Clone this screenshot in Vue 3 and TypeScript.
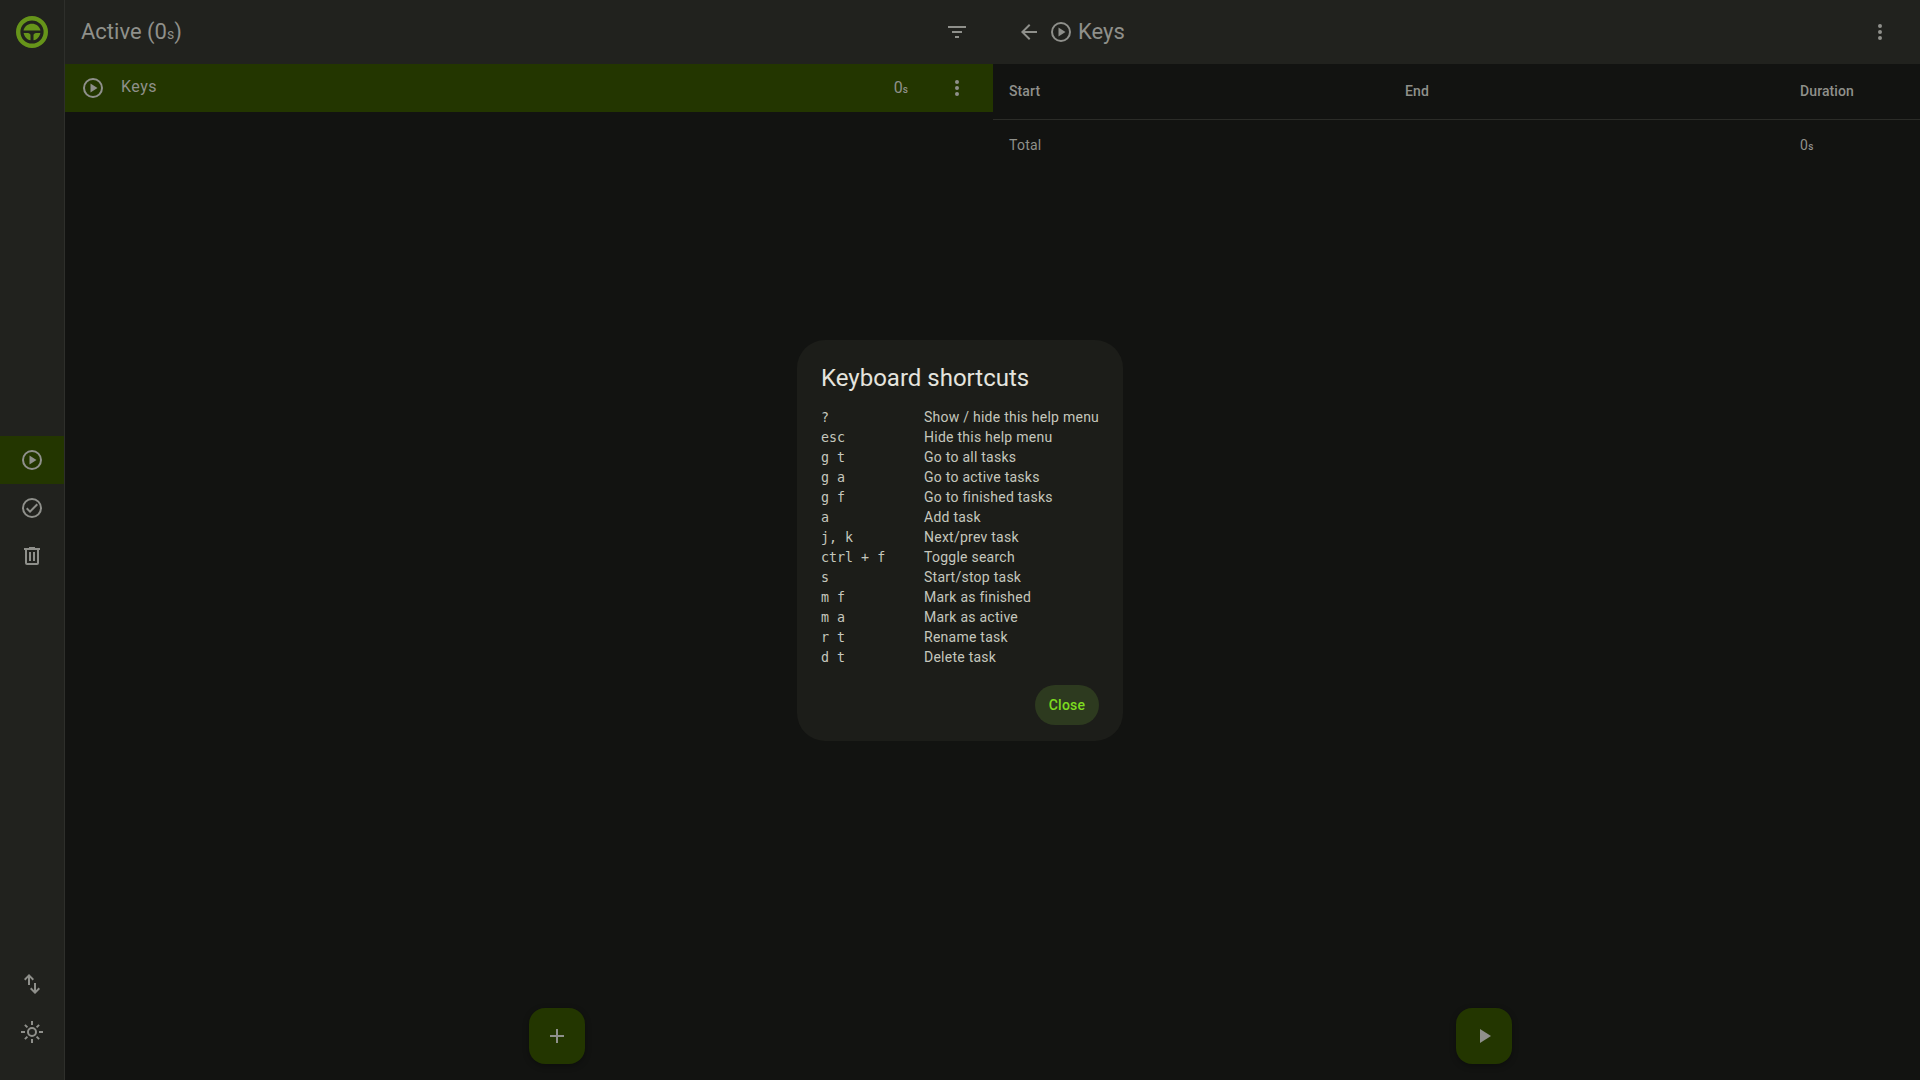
<template>
  <div class="app">
    <nav class="rail">
      <div class="logo">
        <svg width="32" height="32" viewBox="0 0 32 32">
          <circle cx="16" cy="16" r="13.800" fill="none" stroke="#66941a" stroke-width="4.400" />
          <path d="M7.500 14.500C8.400 10.500 12 7.800 16 7.800s7.600 2.700 8.500 6.700z" fill="#66941a" />
          <path d="M7.600 17h4.400c1.200 0 2.500 1 2.500 2.200v5.100c-3.600-.7-6.200-3.600-6.900-7.300z" fill="#66941a" />
          <path d="M24.400 17H20c-1.200 0-2.500 1-2.500 2.200v5.100c3.600-.7 6.200-3.600 6.900-7.300z" fill="#66941a" />
        </svg>
      </div>
      <div class="rail-middle">
        <div class="rail-item selected">
          <svg class="icon" viewBox="0 0 24 24"><path d="M12 2a10 10 0 1 0 0 20 10 10 0 0 0 0-20zm0 18a8 8 0 1 1 0-16 8 8 0 0 1 0 16z" /><path d="M9.500 7.500v9l7-4.500z" /></svg>
        </div>
        <div class="rail-item">
          <svg class="icon" viewBox="0 0 24 24"><path d="M12 2a10 10 0 1 0 0 20 10 10 0 0 0 0-20zm0 18a8 8 0 1 1 0-16 8 8 0 0 1 0 16z" /><path d="M16.600 7.600 10 14.200l-2.600-2.600L6 13l4 4 8-8z" /></svg>
        </div>
        <div class="rail-item">
          <svg class="icon" viewBox="0 0 24 24"><path d="M15 4V3H9v1H4v2h1v13a2 2 0 0 0 2 2h10a2 2 0 0 0 2-2V6h1V4zm2 15H7V6h10z" /><path d="M9 8h2v9H9zm4 0h2v9h-2z" /></svg>
        </div>
      </div>
      <div class="rail-bottom">
        <div class="rail-item">
          <svg class="icon" viewBox="0 0 24 24"><path d="M9 2 4 7l1.400 1.400L8 5.800V13h2V5.800l2.600 2.600L14 7z" /><path d="M14 11v7.200l-2.600-2.600L10 17l5 5 5-5-1.400-1.400-2.600 2.600V11z" /></svg>
        </div>
        <div class="rail-item">
          <svg class="icon" viewBox="0 0 24 24"><path d="M12 7a5 5 0 1 0 0 10 5 5 0 0 0 0-10zm0 8a3 3 0 1 1 0-6 3 3 0 0 1 0 6z" /><path d="M11 1h2v4h-2zm0 18h2v4h-2zM1 11h4v2H1zm18 0h4v2h-4zM4.200 5.600l1.400-1.400 2.500 2.500-1.400 1.400zm11.700 11.700 1.400-1.400 2.500 2.500-1.400 1.400zM4.200 18.400l2.500-2.500 1.400 1.400-2.500 2.500zM15.900 6.700l2.500-2.500 1.400 1.400-2.500 2.500z" /></svg>
        </div>
      </div>
    </nav>

    <section class="pane list-pane">
      <header class="topbar">
        <h1>Active (0<small>s</small>)</h1>
        <svg class="icon filter" viewBox="0 0 24 24"><path d="M3 6h18v2H3zm4 5h10v2H7zm3 5h4v2h-4z" /></svg>
      </header>
      <div class="task-row">
        <svg class="icon" viewBox="0 0 24 24"><path d="M12 2a10 10 0 1 0 0 20 10 10 0 0 0 0-20zm0 18a8 8 0 1 1 0-16 8 8 0 0 1 0 16z" /><path d="M9.500 7.500v9l7-4.500z" /></svg>
        <span class="task-name">Keys</span>
        <span class="task-time">0<small>s</small></span>
        <svg class="icon dots" viewBox="0 0 24 24"><path d="M12 8a2 2 0 1 0 0-4 2 2 0 0 0 0 4zm0 2a2 2 0 1 0 0 4 2 2 0 0 0 0-4zm0 6a2 2 0 1 0 0 4 2 2 0 0 0 0-4z" /></svg>
      </div>
      <button class="fab">
        <svg class="icon" viewBox="0 0 24 24"><path d="M19 13h-6v6h-2v-6H5v-2h6V5h2v6h6z" /></svg>
      </button>
    </section>

    <section class="pane detail-pane">
      <header class="topbar detail-top">
        <svg class="icon back" viewBox="0 0 24 24"><path d="M20 11H7.800l5.600-5.600L12 4l-8 8 8 8 1.400-1.400L7.800 13H20z" /></svg>
        <svg class="icon" viewBox="0 0 24 24"><path d="M12 2a10 10 0 1 0 0 20 10 10 0 0 0 0-20zm0 18a8 8 0 1 1 0-16 8 8 0 0 1 0 16z" /><path d="M9.500 7.500v9l7-4.500z" /></svg>
        <h1>Keys</h1>
        <svg class="icon dots end" viewBox="0 0 24 24"><path d="M12 8a2 2 0 1 0 0-4 2 2 0 0 0 0 4zm0 2a2 2 0 1 0 0 4 2 2 0 0 0 0-4zm0 6a2 2 0 1 0 0 4 2 2 0 0 0 0-4z" /></svg>
      </header>
      <div class="table-row table-head">
        <span>Start</span><span>End</span><span>Duration</span>
      </div>
      <div class="table-row table-total">
        <span>Total</span><span></span><span>0<small>s</small></span>
      </div>
      <button class="fab fab-play">
        <svg class="icon" viewBox="0 0 24 24"><path d="M8 5v14l11-7z" /></svg>
      </button>
    </section>

    <div class="scrim">
      <div class="dialog">
        <h2>Keyboard shortcuts</h2>
        <div class="shortcuts">
          <template v-for="s in shortcuts" :key="s.keys">
            <kbd>{{ s.keys }}</kbd>
            <span>{{ s.label }}</span>
          </template>
        </div>
        <div class="actions">
          <button class="close">Close</button>
        </div>
      </div>
    </div>
  </div>
</template>

<script setup lang="ts">
const shortcuts: { keys: string; label: string }[] = [
  { keys: '?', label: 'Show / hide this help menu' },
  { keys: 'esc', label: 'Hide this help menu' },
  { keys: 'g t', label: 'Go to all tasks' },
  { keys: 'g a', label: 'Go to active tasks' },
  { keys: 'g f', label: 'Go to finished tasks' },
  { keys: 'a', label: 'Add task' },
  { keys: 'j, k', label: 'Next/prev task' },
  { keys: 'ctrl + f', label: 'Toggle search' },
  { keys: 's', label: 'Start/stop task' },
  { keys: 'm f', label: 'Mark as finished' },
  { keys: 'm a', label: 'Mark as active' },
  { keys: 'r t', label: 'Rename task' },
  { keys: 'd t', label: 'Delete task' },
];
</script>

<style>
html, body { background: #121311; }
</style>

<style scoped>
.app { position: relative; display: flex; height: 1080px; overflow: hidden; background: #121311; color: #8f908b; font-family: Roboto, "Liberation Sans", sans-serif; font-size: 14px; letter-spacing: .25px; }
.icon { width: 24px; height: 24px; fill: #8f908b; flex: none; }

.rail { width: 64px; flex: none; display: flex; flex-direction: column; background: #21221e; border-right: 1px solid #2e2f2b; }
.logo { height: 64px; display: flex; align-items: center; justify-content: center; }
.rail-middle { margin-top: 372px; }
.rail-bottom { margin-top: auto; margin-bottom: 24px; }
.rail-item { height: 48px; display: flex; align-items: center; justify-content: center; }
.rail-item.selected { background: #233600; }

.pane { position: relative; display: flex; flex-direction: column; }
.list-pane { width: 928px; flex: none; }
.detail-pane { flex: 1; min-width: 0; }

.topbar { height: 64px; flex: none; display: flex; align-items: center; background: #21221e; padding: 0 24px 0 16px; }
.topbar h1 { margin: 0 0 2px; font-size: 22px; font-weight: 400; letter-spacing: 0; color: #8f908b; }
.topbar small { font-size: 14px; }
.filter { margin-left: auto; }
.detail-top { padding: 0 28px 0 24px; gap: 8px; }
.detail-top h1 { margin-left: -3px; }
.end { margin-left: auto; }

.task-row { height: 48px; display: flex; align-items: center; background: #233600; padding: 0 24px 0 16px; }
.task-name { margin-left: 16px; padding-bottom: 3px; font-size: 16px; letter-spacing: .5px; }
.task-time { margin-left: auto; margin-right: 37px; padding-bottom: 2px; font-size: 16px; letter-spacing: 0; }
.task-time small { font-size: 10px; font-weight: 500; }

.table-row { display: grid; grid-template-columns: 396px 395px 1fr; padding-left: 16px; }
.table-head { box-sizing: border-box; height: 56px; padding-bottom: 2px; align-items: center; border-bottom: 1px solid #2b2c28; font-weight: 500; letter-spacing: .1px; }
.table-total { height: 50px; align-items: center; }
.table-total small { font-size: 10px; font-weight: 500; }

.fab { position: absolute; left: 50%; bottom: 16px; width: 56px; height: 56px; border: 0; border-radius: 16px; background: #233600; display: flex; align-items: center; justify-content: center; box-shadow: 0 2px 6px rgba(0, 0, 0, .3); }
.fab-play { left: calc(50% - .5px); }

.scrim { position: absolute; inset: 0; display: flex; align-items: center; justify-content: center; }
.dialog { width: 326px; box-sizing: border-box; padding: 25px 24px 16px; border-radius: 28px; background: #1c1d19; }
.dialog h2 { margin: 0 0 16px; font-size: 24px; line-height: 26px; font-weight: 400; letter-spacing: 0; color: #e4e4de; }
.shortcuts { display: grid; grid-template-columns: 103px 1fr; grid-auto-rows: 20px; align-items: center; color: #c5c7bd; white-space: nowrap; }
kbd { padding-top: 1px; font-family: "DejaVu Sans Mono", monospace; font-size: 13.33px; letter-spacing: 0; }
.actions { display: flex; justify-content: flex-end; margin-top: 18px; }
.close { width: 64px; height: 40px; border: 0; border-radius: 20px; background: #2d3a1f; color: #7ddc1f; font-family: inherit; font-size: 14px; font-weight: 500; letter-spacing: .25px; padding: 0; }
</style>
